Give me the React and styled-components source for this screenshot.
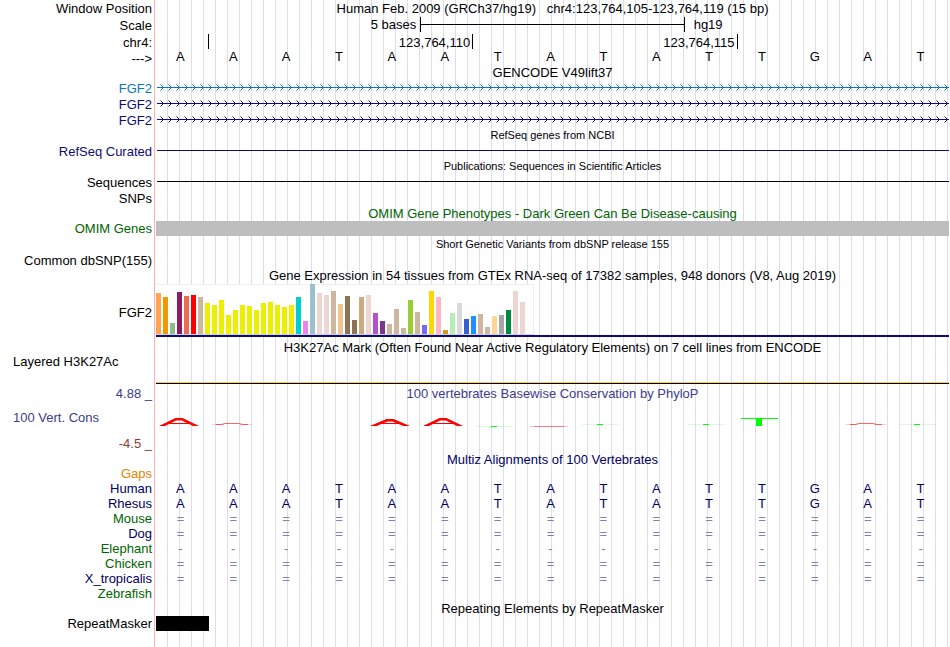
import { useId } from 'react'
import styled, { createGlobalStyle } from 'styled-components'

const BASES = 'AAATAATATATTGAT'.split('')

const navy = '#000064'
const green = '#006400'

const tissues = [
  [41, '#ffa54f'], [37, '#ee9a00'], [11, '#8fbc8f'], [42, '#8b1c62'],
  [38, '#ee6a50'], [39, '#ff0000'], [37, '#cdb79e'], [31, '#eeee00'],
  [29, '#eeee00'], [34, '#eeee00'], [19, '#eeee00'], [24, '#eeee00'],
  [29, '#eeee00'], [28, '#eeee00'], [24, '#eeee00'], [31, '#eeee00'],
  [32, '#eeee00'], [29, '#eeee00'], [27, '#eeee00'], [29, '#eeee00'],
  [37, '#00cdcd'], [13, '#ee82ee'], [50, '#9ac0cd'], [41, '#eed5d2'],
  [39, '#eed5d2'], [43, '#cdb79e'], [30, '#eec591'], [38, '#8b7355'],
  [14, '#8b7355'], [37, '#cdaa7d'], [39, '#eed5d2'], [21, '#b452cd'],
  [13, '#7a378b'], [10, '#cdb79e'], [25, '#cdb79e'], [6, '#cdb79e'],
  [34, '#9acd32'], [22, '#cdb79e'], [9, '#7a67ee'], [43, '#ffd700'],
  [37, '#ffb6c1'], [4, '#cd9b1d'], [21, '#b4eeb4'], [31, '#d9d9d9'],
  [15, '#3a5fcd'], [18, '#1e90ff'], [20, '#cdb79e'], [7, '#cdb79e'],
  [18, '#ffd39b'], [19, '#a6a6a6'], [24, '#008b45'], [43, '#eed5d2'],
  [32, '#eed5d2'],
]

// one entry per base: kind of mark and its top edge in the track
const scores = [
  ['peak', 16], ['wave', 21], null, null, ['peak', 17], ['peak', 16],
  ['dash', 24], ['flat', 24], ['dash', 22], null, ['dash', 22],
  ['drop', 16], null, ['wave', 21], ['dash', 22],
]

const species = [
  { name: 'Gaps', color: '#e68200' },
  { name: 'Human', color: navy, cells: BASES },
  { name: 'Rhesus', color: navy, cells: BASES },
  { name: 'Mouse', color: green, fill: '=' },
  { name: 'Dog', color: navy, fill: '=' },
  { name: 'Elephant', color: green, fill: '-' },
  { name: 'Chicken', color: green, fill: '=' },
  { name: 'X_tropicalis', color: navy, fill: '=' },
  { name: 'Zebrafish', color: green },
]

function Title({ children, ...rest }) {
  return (
    <Row $h={rest.$h || 15}>
      <Label />
      <TitleText {...rest}>{children}</TitleText>
    </Row>
  )
}

function ArrowLine({ color }) {
  const id = useId()
  return (
    <FullSvg height="16" aria-hidden="true" shapeRendering="crispEdges">
      <defs>
        <pattern id={id} width="8" height="16" patternUnits="userSpaceOnUse">
          <path d="M5 5h1v1h-1zM6 6h1v1h-1zM6 8h1v1h-1zM5 9h1v1h-1z" fill={color} />
          <path d="M4 4h1v1h-1zM4 10h1v1h-1z" fill={color} opacity="0.5" />
        </pattern>
      </defs>
      <rect x="1" width="100%" height="16" fill={`url(#${id})`} />
      <rect x="1" y="7" width="100%" height="1" fill={color} />
    </FullSvg>
  )
}

function Gene({ name, color }) {
  return (
    <Row $h={16}>
      <Label $color={color}>{name}</Label>
      <Track>
        <ArrowLine color={color} />
      </Track>
    </Row>
  )
}

function Score({ kind, top }) {
  return (
    <svg width="40" height="50" aria-hidden="true">
      {kind === 'peak' && (
        <svg y={top} width="40" height={24 - top} stroke="#ff0000" fill="none">
          <path d={`M1 ${25 - top}L17 1.2H23L39 ${25 - top}`} strokeWidth="2.6" />
          <path d={`M10 ${21.5 - top}H30`} />
        </svg>
      )}
      {kind === 'wave' && (
        <g stroke="#ff0000" fill="none">
          <path d={`M0 ${top + 1.5}H40`} strokeOpacity="0.2" strokeDasharray="12 16" />
          <path
            d={`M4 ${top + 1.5}H9L13 ${top + 0.5}H27L31 ${top + 1.5}H36`}
            strokeOpacity="0.6"
          />
        </g>
      )}
      {kind === 'flat' && (
        <g stroke="#ff0000">
          <path d={`M1 ${top + 0.5}H39`} strokeOpacity="0.25" />
          <path d={`M5 ${top + 0.5}H35`} strokeOpacity="0.35" />
        </g>
      )}
      {kind === 'dash' && (
        <g fill="#00ff00">
          <rect y={top} width="37" height="1" opacity="0.15" />
          <rect x="15" y={top} width="6" height="1" />
        </g>
      )}
      {kind === 'drop' && (
        <g fill="#00ff00">
          <rect y={top} width="37" height="1" />
          <rect x="15" y={top} width="6" height="8" />
        </g>
      )}
    </svg>
  )
}

function App() {
  return (
    <>
      <GlobalStyle />
      <Browser>
        <Row $h={17}>
          <Label>Window Position</Label>
          <TitleText>
            Human Feb. 2009 (GRCh37/hg19) &nbsp; chr4:123,764,105-123,764,119 (15 bp)
          </TitleText>
        </Row>
        <Row $h={17}>
          <Label>Scale</Label>
          <Bases>
            <ScaleText>5 bases</ScaleText>
            <ScaleBar />
            <ScaleName>hg19</ScaleName>
          </Bases>
        </Row>
        <Row $h={17}>
          <Label>chr4:</Label>
          <Bases>
            <Tick $to={2} />
            <Tick $to={7}>123,764,110</Tick>
            <Tick $to={12}>123,764,115</Tick>
          </Bases>
        </Row>
        <Row $h={14}>
          <Label>---&gt;</Label>
          <Bases>
            {BASES.map((base, i) => (
              <Base key={i} $h={12}>{base}</Base>
            ))}
          </Bases>
        </Row>

        <Title>GENCODE V49lift37</Title>
        <Gene name="FGF2" color="#0c78b4" />
        <Gene name="FGF2" color="#0c0c78" />
        <Gene name="FGF2" color="#0c0c78" />

        <Title $small>RefSeq genes from NCBI</Title>
        <Row $h={16}>
          <Label $color="#0c0c78">RefSeq Curated</Label>
          <Track>
            <Line $color="#0c0c78" />
          </Track>
        </Row>

        <Title $small>Publications: Sequences in Scientific Articles</Title>
        <Row $h={16}>
          <Label>Sequences</Label>
          <Track>
            <Line $color="#000" />
          </Track>
        </Row>
        <Row $h={16}>
          <Label>SNPs</Label>
        </Row>

        <Title $color={green}>
          OMIM Gene Phenotypes - Dark Green Can Be Disease-causing
        </Title>
        <Row $h={15}>
          <Label $color={green}>OMIM Genes</Label>
          <Track>
            <Block $color="#bebebe" />
          </Track>
        </Row>

        <Title $small $h={17}>Short Genetic Variants from dbSNP release 155</Title>
        <Row $h={14}>
          <Label>Common dbSNP(155)</Label>
        </Row>

        <Title $h={17}>
          Gene Expression in 54 tissues from GTEx RNA-seq of 17382 samples, 948 donors (V8, Aug 2019)
        </Title>
        <Row $h={56}>
          <Label>FGF2</Label>
          <Expression>
            <Chart>
              {tissues.map(([height, color], i) => (
                <Bar key={i} $color={color} style={{ height }} />
              ))}
            </Chart>
          </Expression>
        </Row>

        <Title $h={14}>
          H3K27Ac Mark (Often Found Near Active Regulatory Elements) on 7 cell lines from ENCODE
        </Title>
        <Row $h={30}>
          <Label $wide>Layered H3K27Ac</Label>
          <Signal />
        </Row>

        <Row $h={18}>
          <Label $color="#3c3c8c">4.88 _</Label>
          <TitleText $color="#3c3c8c">
            100 vertebrates Basewise Conservation by PhyloP
          </TitleText>
        </Row>
        <Row $h={50}>
          <Limits>
            <span>100 Vert. Cons</span>
            <Minimum>-4.5 _</Minimum>
          </Limits>
          <Bases>
            {scores.map((score, i) => (
              <ScoreCell key={i}>
                {score && <Score kind={score[0]} top={score[1]} />}
              </ScoreCell>
            ))}
          </Bases>
        </Row>

        <Title $color={navy} $h={14}>Multiz Alignments of 100 Vertebrates</Title>
        {species.map(({ name, color, cells, fill }) => (
          <Row key={name} $h={15}>
            <Label $color={color}>{name}</Label>
            <Bases>
              {(cells || (fill ? BASES.map(() => fill) : [])).map((base, i) => (
                <Base key={i} $h={15} $color={cells ? navy : '#8080b4'}>{base}</Base>
              ))}
            </Bases>
          </Row>
        ))}

        <Title>Repeating Elements by RepeatMasker</Title>
        <Row $h={15}>
          <Label>RepeatMasker</Label>
          <Bases>
            <Block $color="#000" />
          </Bases>
        </Row>
      </Browser>
    </>
  )
}

export default App

const GlobalStyle = createGlobalStyle`
  body {
    margin: 0;
    background: #fff;
  }
`
const Browser = styled.main`
  box-sizing: border-box;
  min-height: 100vh;
  padding-right: 1px;
  overflow: hidden;
  font-family: 'Liberation Sans', Arial, sans-serif;
  font-size: 13px;
  color: #000;
  background:
    linear-gradient(#ffb4b4, #ffb4b4) 154px 0 / 1px 100% no-repeat,
    linear-gradient(#fff, #fff) 0 0 / 156px 100% no-repeat,
    repeating-linear-gradient(90deg, transparent 0 11px, #dcdcfa 11px 12px);
`
const Row = styled.section`
  display: grid;
  grid-template-columns: 152px minmax(0, 1fr);
  column-gap: 4px;
  height: ${({ $h }) => $h}px;
`
const Label = styled.div`
  display: flex;
  align-items: center;
  justify-content: ${({ $wide }) => ($wide ? 'flex-start' : 'flex-end')};
  align-self: ${({ $wide }) => ($wide ? 'start' : 'stretch')};
  padding-left: 13px;
  line-height: 15px;
  white-space: nowrap;
  color: ${({ $color }) => $color || 'inherit'};
`
const TitleText = styled.h2`
  margin: 0;
  align-self: center;
  font-size: ${({ $small }) => ($small ? 11 : 13)}px;
  font-weight: normal;
  line-height: 15px;
  text-align: center;
  white-space: nowrap;
  color: ${({ $color }) => $color || 'inherit'};
`
const Track = styled.div`
  display: grid;
`
const Bases = styled.div`
  display: grid;
  grid-template-columns: repeat(15, minmax(0, 1fr));
`
const Base = styled.span`
  padding-right: 4px;
  line-height: ${({ $h }) => $h}px;
  text-align: center;
  color: ${({ $color }) => $color || 'inherit'};
`
const ScaleText = styled.span`
  grid-column: 1 / 6;
  padding-right: 4px;
  line-height: 16px;
  text-align: right;
`
const ScaleBar = styled.span`
  grid-column: 6 / 11;
  height: 15px;
  border: solid #000;
  border-width: 0 1px;
  background: linear-gradient(#000, #000) 0 7px / 100% 1px no-repeat;
`
const ScaleName = styled.span`
  padding-left: 9px;
  line-height: 16px;
`
const Tick = styled.span`
  grid-row: 1;
  grid-column: 1 / ${({ $to }) => $to};
  height: 15px;
  padding-right: 2px;
  border-right: 1px solid #000;
  line-height: 17px;
  text-align: right;
`
const FullSvg = styled.svg`
  display: block;
  width: 100%;
`
const Line = styled.div`
  height: 1px;
  margin: 7px 0 0 1px;
  background: ${({ $color }) => $color};
`
const Block = styled.div`
  background: ${({ $color }) => $color};
`
const Expression = styled.div`
  align-self: start;
  border-bottom: 2px solid #0c0c78;
`
const Chart = styled.div`
  display: flex;
  align-items: flex-end;
  gap: 2px;
  box-sizing: border-box;
  width: 378px;
  height: 51px;
  border-bottom: 1px solid #d2d2d2;
  background:
    linear-gradient(#f0f0f0, #f0f0f0) 0 0 / 100% 1px no-repeat,
    linear-gradient(#f0f0f0, #f0f0f0) 100% 0 / 1px 100% no-repeat,
    #fff;
`
const Bar = styled.div`
  width: 5px;
  background: ${({ $color }) => $color};
`
const Signal = styled.div`
  align-self: end;
  height: 1px;
  border-top: 1px solid #ffc83c;
  background: #000;
`
const Limits = styled.div`
  display: flex;
  flex-direction: column;
  justify-content: space-between;
  padding: 8px 0 4px 13px;
  line-height: 15px;
  color: #3c3c8c;
`
const Minimum = styled.span`
  text-align: right;
  color: #8c3c3c;
`
const ScoreCell = styled.div`
  padding-left: 3px;
`
